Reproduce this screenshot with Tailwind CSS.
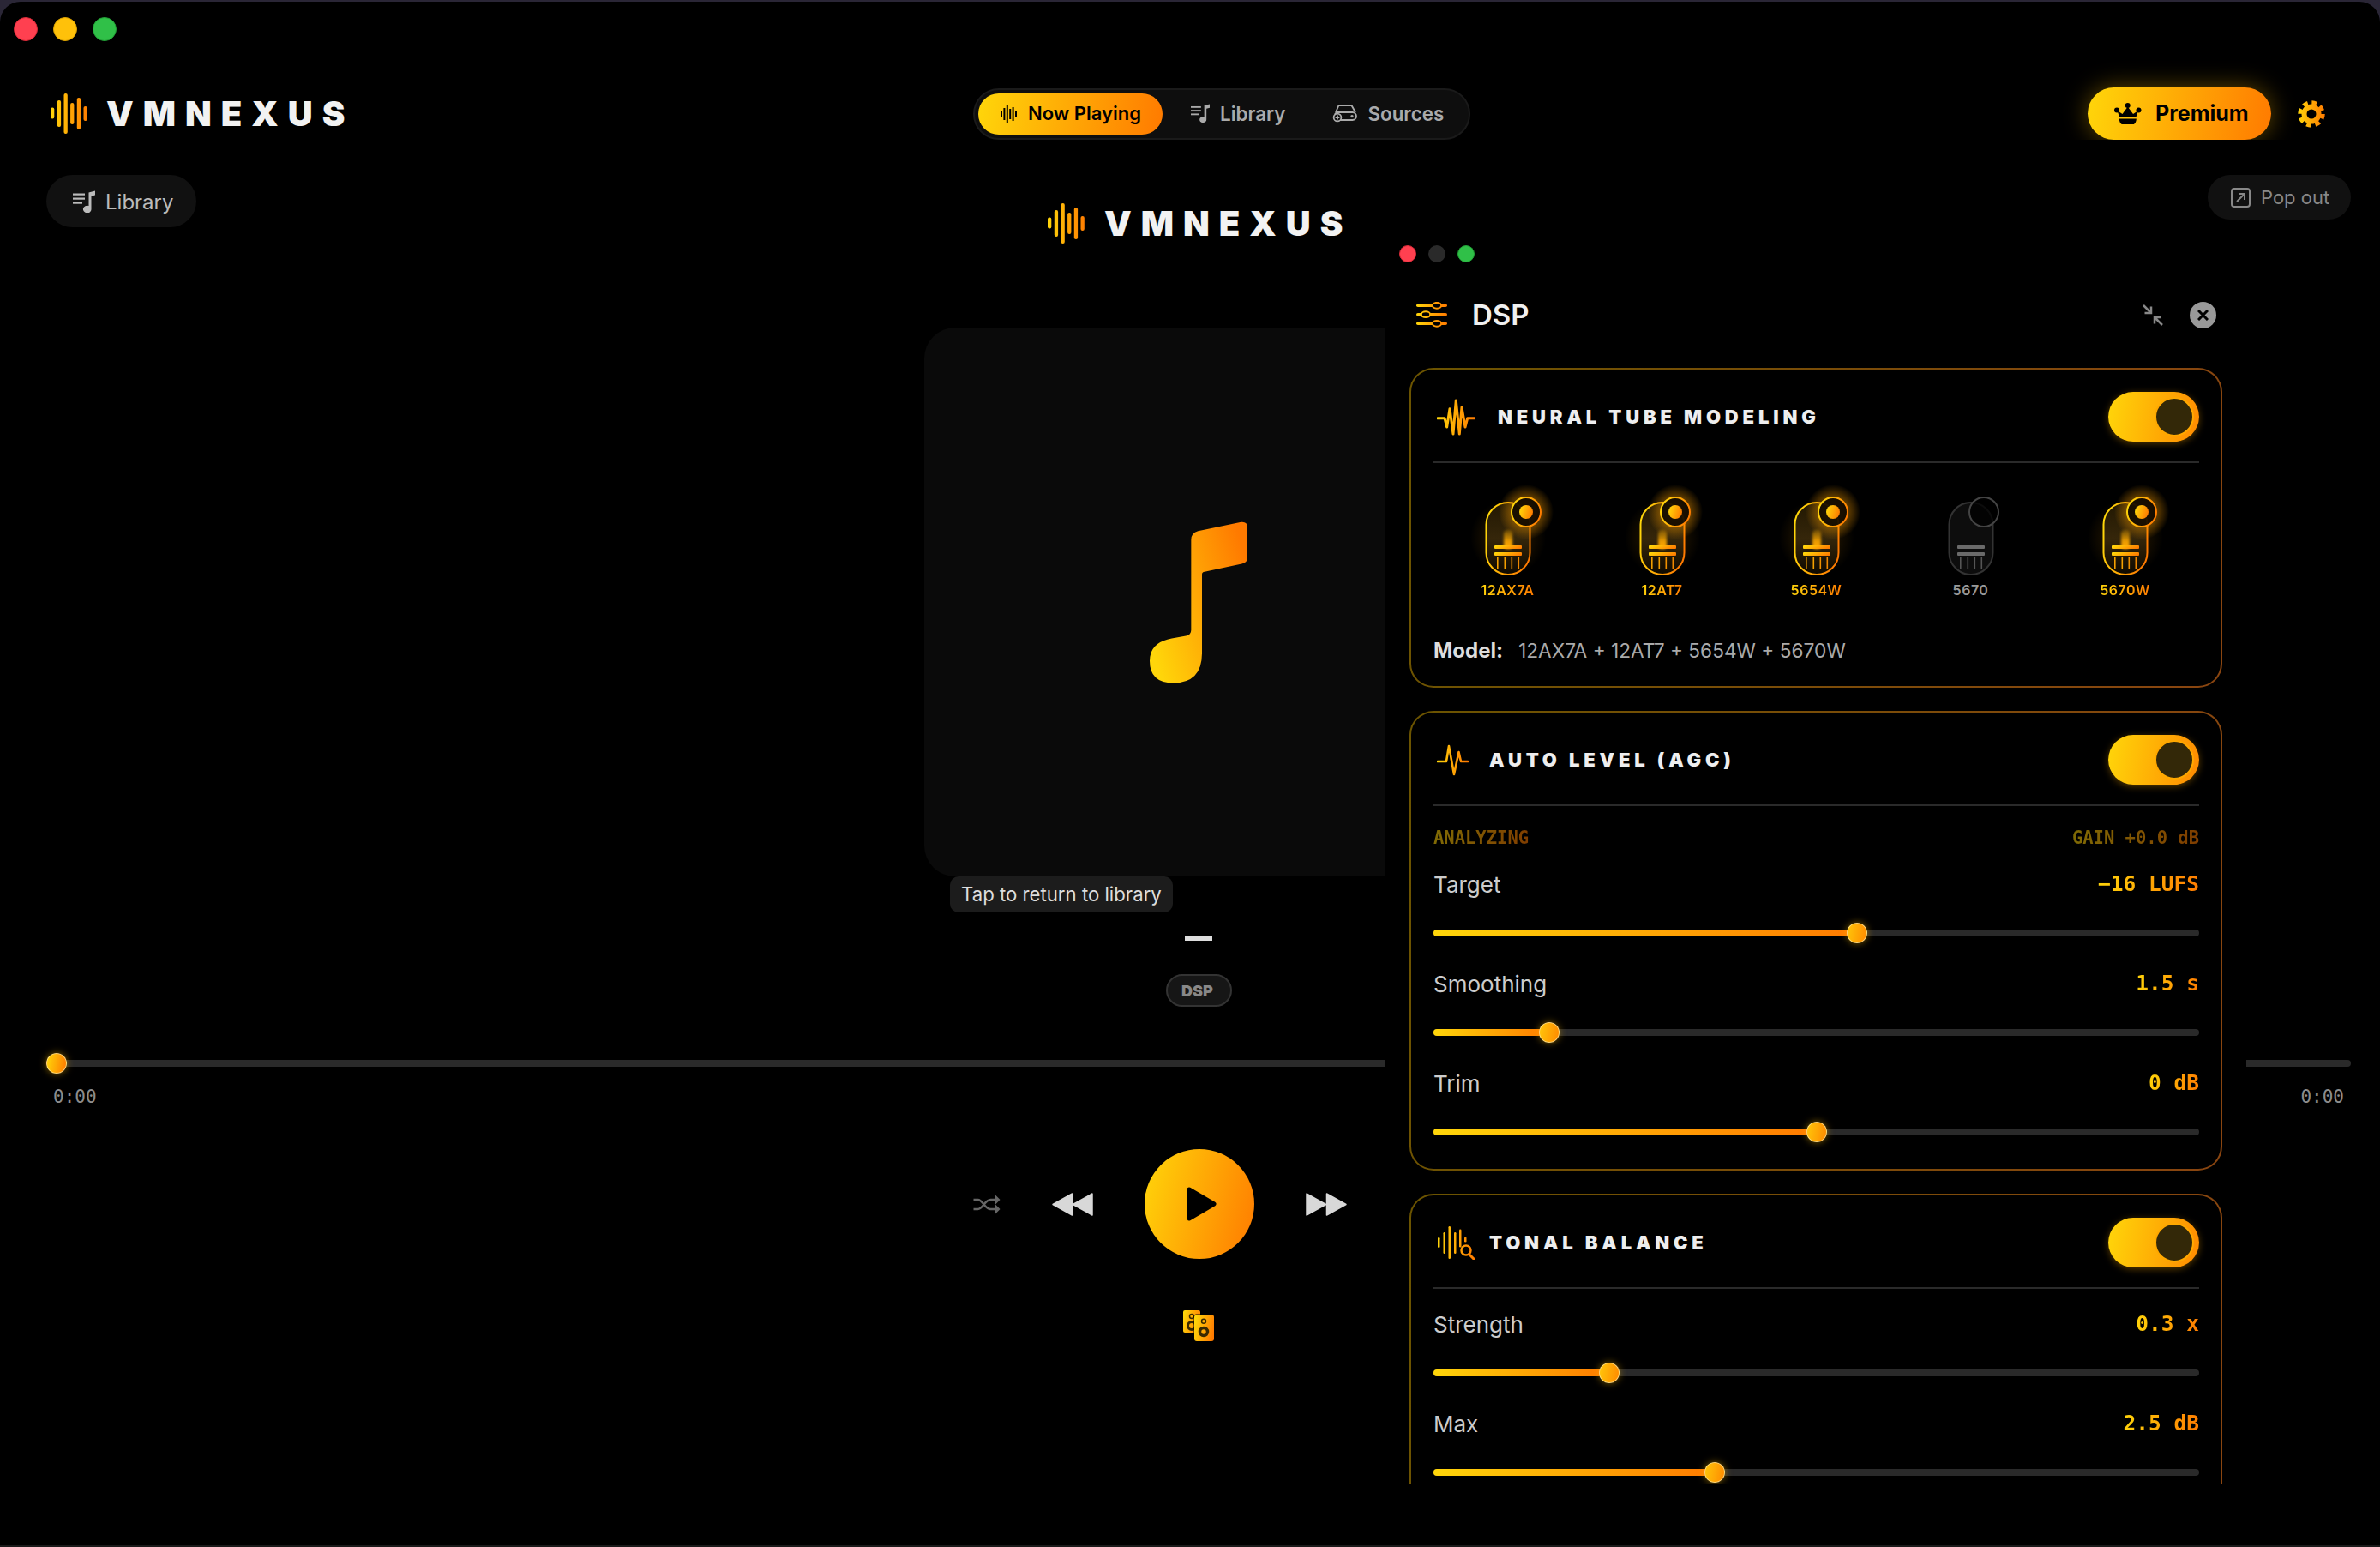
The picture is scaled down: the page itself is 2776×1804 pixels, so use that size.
<!DOCTYPE html>
<html lang="en">
<head>
    <meta charset="UTF-8">
    <title>VMNEXUS</title>
    <script src="https://cdn.jsdelivr.net/npm/@tailwindcss/browser@4"></script>
</head>
<body class="bg-[#2a2636] w-[2776px] h-[1804px] overflow-hidden [font-family:Inter,sans-serif] text-[#ddd]">
    <!-- shared gradients and repeated shapes -->
    <svg class="absolute w-0 h-0" aria-hidden="true">
        <defs>
            <linearGradient id="bb" x1="0" y1="0.35" x2="1" y2="0.65"><stop offset="0" stop-color="#ffd60a"/><stop offset="1" stop-color="#ff7a00"/></linearGradient>
            <linearGradient id="note" x1="0" y1="0.75" x2="1" y2="0.25"><stop offset="0" stop-color="#ffd60a"/><stop offset="1" stop-color="#ff7a00"/></linearGradient>
            <linearGradient id="u32" gradientUnits="userSpaceOnUse" x1="0" y1="0" x2="32" y2="0"><stop offset="0" stop-color="#ffd60a"/><stop offset="1" stop-color="#ff7a00"/></linearGradient>
            <linearGradient id="u36" gradientUnits="userSpaceOnUse" x1="0" y1="0" x2="36" y2="0"><stop offset="0" stop-color="#ffd60a"/><stop offset="1" stop-color="#ff7a00"/></linearGradient>
            <linearGradient id="u45" gradientUnits="userSpaceOnUse" x1="0" y1="0" x2="45" y2="0"><stop offset="0" stop-color="#ffd60a"/><stop offset="1" stop-color="#ff7a00"/></linearGradient>
            <linearGradient id="tubefill" x1="0" y1="0" x2="0" y2="1"><stop offset="0" stop-color="#221802"/><stop offset="0.5" stop-color="#35260a"/><stop offset="1" stop-color="#0e0900"/></linearGradient>
            <linearGradient id="filament" x1="0" y1="0" x2="0" y2="1"><stop offset="0" stop-color="#ffb000" stop-opacity="0.25"/><stop offset="0.6" stop-color="#ffa800" stop-opacity="0.9"/><stop offset="1" stop-color="#ffa800"/></linearGradient>
            <radialGradient id="lampglow"><stop offset="0.35" stop-color="#ffa000" stop-opacity="0.55"/><stop offset="1" stop-color="#ffa000" stop-opacity="0"/></radialGradient>
            <filter id="soft" x="-100%" y="-30%" width="300%" height="160%"><feGaussianBlur stdDeviation="1.6"/></filter>
            <g id="wave-logo">
                <rect x="0" y="16.5" width="4.3" height="13" rx="2"/><rect x="7.8" y="8" width="4.3" height="31" rx="2"/><rect x="15.5" y="0" width="4.3" height="47" rx="2"/><rect x="23.1" y="11" width="4.3" height="25" rx="2"/><rect x="30.8" y="5" width="4.3" height="37" rx="2"/><rect x="38.5" y="15" width="4.3" height="17" rx="2"/>
            </g>
            <g id="tube-on">
                <circle cx="50" cy="50" r="44" fill="url(#lampglow)" opacity="0.25"/>
                <rect x="24.5" y="9" width="51" height="84" rx="25.5" fill="url(#tubefill)" stroke="url(#bb)" stroke-width="2"/>
                <rect x="45" y="41" width="10" height="22" rx="4" fill="url(#filament)" filter="url(#soft)"/>
                <rect x="34" y="59" width="32" height="4" rx="1" fill="url(#bb)"/>
                <rect x="34" y="67" width="32" height="4" rx="1" fill="url(#bb)"/>
                <rect x="37" y="73" width="1.6" height="14" fill="#f5a000"/><rect x="45.5" y="73" width="1.6" height="14" fill="#f5a000"/><rect x="53.5" y="73" width="1.6" height="14" fill="#f09000"/><rect x="61.5" y="73" width="1.6" height="14" fill="#f08800"/>
            </g>
            <g id="lamp-on">
                <circle cx="0" cy="0" r="32" fill="url(#lampglow)"/>
                <circle cx="0" cy="0" r="17" fill="#0c0700" fill-opacity="0.9" stroke="url(#bb)" stroke-width="2"/>
                <circle cx="0" cy="0" r="8" fill="url(#bb)"/>
            </g>
        </defs>
    </svg>

    <div class="relative mt-[2px] w-[2776px] h-[1800px] rounded-t-[24px] bg-black overflow-hidden">
        <!-- title bar -->
        <div class="flex gap-[18px] h-[64px] pt-[18px] pl-[16px]">
            <span class="size-[28px] rounded-full bg-[#ff4050] border border-[#d92a38]"></span>
            <span class="size-[28px] rounded-full bg-[#ffc10a] border border-[#dca300]"></span>
            <span class="size-[28px] rounded-full bg-[#30c048] border border-[#22a036]"></span>
        </div>

        <!-- top bar -->
        <header class="flex items-center pl-[59px] pt-[36px] overflow-hidden">
            <div class="flex items-center w-[1076px]">
                <svg class="w-[43px] h-[47px]" viewBox="0 0 43 47" fill="url(#u45)"><use href="#wave-logo"/></svg>
                <span class="ml-[22px] text-[40px] leading-none font-black tracking-[11px] text-[#f2f2f2]">VMNEXUS</span>
            </div>
            <nav class="flex items-center w-[580px] h-[60px] rounded-full bg-[#0e0e0e] border-2 border-[#1a1a1a] pl-[4px]">
                <div class="flex items-center h-[48px] w-[215px] pl-[26px] rounded-full bg-[linear-gradient(100deg,#ffd60a,#ff7a00)] text-black text-[22px] font-semibold">
                    <svg class="w-[19px] h-[20px]" viewBox="0 0 19 20" fill="#000"><rect x="0" y="7" width="2" height="6"/><rect x="3.4" y="3" width="2" height="14"/><rect x="6.8" y="0" width="2" height="20"/><rect x="10.2" y="4" width="2" height="12"/><rect x="13.6" y="2" width="2" height="16"/><rect x="17" y="7" width="2" height="6"/></svg>
                    <span class="ml-[13px]">Now Playing</span>
                </div>
                <div class="flex items-center pl-[33px] text-[#aaa] text-[22.4px] font-semibold">
                    <svg class="w-[22px] h-[24px]" viewBox="0 0 26 26" fill="#aaa"><rect x="0" y="3.5" width="14" height="2.2"/><rect x="0" y="8.5" width="14" height="2.2"/><rect x="0" y="13.5" width="11" height="2.2"/><path d="M18.5 2.5 L26 0.5 V5.5 L21.5 6.7 V21.5 A4.8 4.3 0 1 1 18.5 18 Z"/></svg>
                    <span class="ml-[12px]">Library</span>
                </div>
                <div class="flex items-center pl-[56px] text-[#aaa] text-[22.4px] font-semibold">
                    <svg class="w-[28px] h-[20px] overflow-visible" viewBox="0 0 28 20" fill="none" stroke="#aaa" stroke-width="1.8"><path d="M3 9 L6.5 1 H21.5 L26 9"/><path d="M8 18 H22.5 A4 4 0 0 0 22.5 9 H5.5 A4.5 4.5 0 0 0 2 11"/><circle cx="5" cy="15" r="4.4"/><path d="M5 12.6 V17.4 M2.6 15 H7.4"/><circle cx="22" cy="13.6" r="0.8" fill="#aaa"/></svg>
                    <span class="ml-[12px]">Sources</span>
                </div>
            </nav>
            <div class="ml-[720px] flex items-center w-[214px] h-[61px] pl-[31px] rounded-full bg-[linear-gradient(100deg,#ffd60a,#ff7a00)] shadow-[0_0_28px_rgba(255,190,0,0.38)] text-black text-[25px] font-bold">
                <svg class="w-[32px] h-[25px]" viewBox="0 0 32 25" fill="#000"><circle cx="3" cy="8.5" r="3"/><circle cx="15.7" cy="3" r="3"/><circle cx="28.5" cy="8.5" r="3"/><path d="M3.5 9 L9.5 13 L15.7 4.5 L22 13 L28 9 L25.5 16.5 H6 Z"/><path d="M5.8 18.5 H25.8 C25.6 22.5 24 25 22 25 H9.5 C7.5 25 6 22.5 5.8 18.5 Z"/></svg>
                <span class="ml-[16px]">Premium</span>
            </div>
            <svg class="ml-[31px] size-[32px]" viewBox="0 0 32 32" fill="none"><circle cx="16" cy="16" r="8.5" stroke="url(#u32)" stroke-width="6"/><circle cx="16" cy="16" r="13" stroke="url(#u32)" stroke-width="5.5" stroke-dasharray="5.6 4.61"/></svg>
        </header>

        <!-- player column -->
        <main>
            <div class="grid grid-cols-[1168px_auto_1fr] items-start h-[219px] pt-[41px] pl-[54px] pr-[34px]">
                <div class="flex items-center w-[175px] h-[61px] pl-[31px] rounded-full bg-[#111] text-[#bbb] text-[24px]">
                    <svg class="size-[26px]" viewBox="0 0 26 26" fill="#bbb"><rect x="0" y="3.5" width="14" height="2.2"/><rect x="0" y="8.5" width="14" height="2.2"/><rect x="0" y="13.5" width="11" height="2.2"/><path d="M18.5 2.5 L26 0.5 V5.5 L21.5 6.7 V21.5 A4.8 4.3 0 1 1 18.5 18 Z"/></svg>
                    <span class="ml-[12px] mt-[2px]">Library</span>
                </div>
                <div class="flex items-center mt-[33px]">
                    <svg class="w-[43px] h-[47px]" viewBox="0 0 43 47" fill="url(#u45)"><use href="#wave-logo"/></svg>
                    <span class="ml-[23px] text-[40px] leading-none font-black tracking-[11px] text-[#f2f2f2]">VMNEXUS</span>
                </div>
                <div class="flex justify-end">
                    <div class="flex items-center w-[167px] h-[52px] pl-[27px] rounded-full bg-[#111] text-[#888] text-[22px]">
                        <svg class="size-[23px]" viewBox="0 0 23 23" fill="none" stroke="#888" stroke-width="2"><rect x="1" y="1" width="21" height="21" rx="3"/><path d="M7 16 L16 7 M9 7 H16 V14"/></svg>
                        <span class="ml-[12px]">Pop out</span>
                    </div>
                </div>
            </div>

            <div class="relative ml-[1078px] flex items-center justify-center w-[640px] h-[640px] rounded-[36px] bg-[#0a0a0a]">
                <svg class="w-[114px] h-[189px]" viewBox="183 85 342 566" fill="url(#note)"><path d="M366 270 Q366 262 375 261 L505 233 Q525 228 525 212 L525 105 Q525 85 503 87 L352 118 Q328 125 328 148 L328 465 Q328 482 310 485 L260 494 Q183 508 183 573 Q183 650 265 650 Q366 650 366 545 Z"/></svg>
                <div class="absolute left-[30px] top-[640px] flex items-center h-[42px] px-[13px] rounded-[10px] bg-[#1c1c1c] text-[#ddd] text-[22.2px] whitespace-nowrap">Tap to return to library</div>
            </div>

            <div class="ml-[1078px] w-[640px] flex flex-col items-center">
                <div class="mt-[70px] w-[32px] h-[5px] bg-[#ddd]"></div>
                <div class="mt-[39px] flex items-center justify-center w-[77px] h-[38px] rounded-full bg-[#161616] border-2 border-[#333] text-[#888] text-[18px] font-black pr-[3px]">DSP</div>
            </div>

            <div class="relative mt-[62px] ml-[54px] w-[2688px] h-[8px] bg-[#2a2a2a] rounded-full">
                <div class="absolute left-0 top-[-8px] size-[24px] rounded-full bg-[linear-gradient(100deg,#ffd60a,#ff7a00)] border border-[#ffe9a8]/70 shadow-[0_0_8px_rgba(255,190,0,0.5)]"></div>
            </div>
            <div class="ml-[54px] w-[2688px] mt-[23px] flex justify-between px-[8px] text-[21px] leading-[24px] text-[#8c8c8c] [font-family:'DejaVu_Sans_Mono',monospace]">
                <span>0:00</span><span>0:00</span>
            </div>

            <div class="mt-[49px] ml-[1135px] flex items-center gap-[60px]">
                <svg class="w-[32px] h-[25px]" viewBox="0 0 31 25" fill="none" stroke="#666" stroke-width="2.4"><path d="M0 18 H5 C11 18 13 7 20 7 H26 M0 7 H5 C11 7 13 18 20 18 H26"/><path d="M25 1 L31 7 L25 13 Z M25 12 L31 18 L25 24 Z" fill="#666" stroke="none"/></svg>
                <svg class="w-[48px] h-[27px]" viewBox="0 0 48 27" fill="#d8d8d8" stroke="#d8d8d8" stroke-width="1.5" stroke-linejoin="round"><path d="M1 13.5 L23.5 1 V26 Z M24.5 13.5 L47 1 V26 Z"/></svg>
                <div class="flex items-center justify-center size-[128px] rounded-full bg-[linear-gradient(105deg,#ffd60a,#ff7a00)]">
                    <svg class="w-[35px] h-[40px] ml-[4px]" viewBox="0 0 35 40" fill="#000" stroke="#000" stroke-width="5" stroke-linejoin="round"><path d="M3 3 L32 20 L3 37 Z"/></svg>
                </div>
                <svg class="w-[48px] h-[27px]" viewBox="0 0 48 27" fill="#d8d8d8" stroke="#d8d8d8" stroke-width="1.5" stroke-linejoin="round"><path d="M1 1 V26 L23.5 13.5 Z M24.5 1 V26 L47 13.5 Z"/></svg>
            </div>

            <svg class="mt-[60px] ml-[1380px] size-[36px]" viewBox="0 0 36 36" fill="none">
                <rect x="0" y="0" width="20" height="26" rx="2" fill="url(#bb)"/>
                <circle cx="10" cy="7" r="2.5" stroke="#3a2a00" stroke-width="1.5"/>
                <circle cx="10" cy="18" r="4.5" stroke="#3a2a00" stroke-width="3"/>
                <rect x="12.5" y="4.5" width="24" height="32" rx="3" fill="#000"/>
                <rect x="13" y="5" width="23" height="31" rx="3" fill="url(#bb)"/>
                <circle cx="24" cy="12.7" r="2.5" stroke="#3a2a00" stroke-width="1.5"/>
                <circle cx="24" cy="25" r="4.5" stroke="#3a2a00" stroke-width="3.5"/>
            </svg>
        </main>

        <!-- DSP window, floating over the player -->
        <aside class="absolute left-[1616px] top-[268px] w-[1004px] h-[1461px] bg-black overflow-hidden px-[28px]">
            <div class="flex gap-[14px] pt-[16px] -ml-[12px]">
                <span class="size-[20px] rounded-full bg-[#ff4050] border border-[#d92a38]"></span>
                <span class="size-[20px] rounded-full bg-[#2a2a2a]"></span>
                <span class="size-[20px] rounded-full bg-[#30c048] border border-[#22a036]"></span>
            </div>

            <div class="flex items-center h-[30px] mt-[46px] ml-[8px] mr-[7px]">
                <svg class="w-[36px] h-[30px]" viewBox="0 0 36 30">
                    <g fill="url(#u36)"><rect x="0" y="2.5" width="36" height="3.6" rx="1.8"/><rect x="0" y="12.9" width="36" height="3.6" rx="1.8"/><rect x="0" y="23.5" width="36" height="3.6" rx="1.8"/></g>
                    <g fill="#000" stroke="url(#u36)" stroke-width="2"><ellipse cx="24" cy="4.3" rx="5.2" ry="3.4"/><ellipse cx="11" cy="14.7" rx="5.2" ry="3.4"/><ellipse cx="24" cy="25.3" rx="5.2" ry="3.4"/></g>
                </svg>
                <span class="ml-[29px] text-[33px] leading-none font-semibold text-[#f0f0f0]">DSP</span>
                <svg class="ml-auto w-[24px] h-[25px]" viewBox="0 0 24 25" fill="none" stroke="#888" stroke-width="2.5"><path d="M1 1 L10 10 M10 2.5 V10 H2.5"/><path d="M23 24 L14 15 M14 22.5 V15 H21.5"/></svg>
                <div class="ml-[31px] flex items-center justify-center size-[31px] rounded-full bg-[#999]">
                    <svg class="size-[13px]" viewBox="0 0 13 13" fill="none" stroke="#000" stroke-width="3"><path d="M1 1 L12 12 M12 1 L1 12"/></svg>
                </div>
            </div>

            <!-- Neural tube modeling -->
            <section class="mt-[47px] rounded-[28px] border-2 border-transparent [background:linear-gradient(#000,#000)_padding-box,linear-gradient(100deg,#6b5400,#8a4510)_border-box] pl-[26px] pr-[25px] pt-[26px] pb-[26px]">
                <div class="flex items-center h-[83px] pb-[23px] border-b-2 border-[#2a2a2a]">
                    <svg class="ml-[4px] w-[45px] h-[43px]" viewBox="0 0 45 43" fill="none" stroke="url(#u45)" stroke-width="3" stroke-linejoin="round" stroke-linecap="round"><path d="M1 22.7 H9 L11.7 33 L15 11.7 L19 41 L22.3 2 L26.3 41 L29 10 L33 33 L35.7 22.7 H44"/></svg>
                    <span class="ml-[26px] text-[22px] font-black tracking-[4.85px] text-[#eee]">NEURAL TUBE MODELING</span>
                    <div class="ml-auto flex justify-end items-start w-[106px] h-[58px] p-[6px] rounded-full bg-[linear-gradient(100deg,#ffd60a,#ff8a00)] shadow-[0_2px_8px_rgba(255,170,0,0.35)]">
                        <div class="size-[46px] rounded-full bg-[#332808] border-2 border-[#ffa800]"></div>
                    </div>
                </div>
                <div class="mt-[37px] -mx-[4px] flex justify-center">
                    <div class="w-[180px] shrink-0 flex flex-col items-center">
                        <svg class="size-[100px] overflow-visible" viewBox="0 0 100 100"><use href="#tube-on"/><use href="#lamp-on" x="71" y="20"/></svg>
                        <span class="mt-px text-[16px] leading-[20px] font-semibold tracking-[0.5px] bg-[linear-gradient(100deg,#ffd60a,#ff7a00)] bg-clip-text text-transparent">12AX7A</span>
                    </div>
                    <div class="w-[180px] shrink-0 flex flex-col items-center">
                        <svg class="size-[100px] overflow-visible" viewBox="0 0 100 100"><use href="#tube-on"/><use href="#lamp-on" x="65" y="20"/></svg>
                        <span class="mt-px text-[16px] leading-[20px] font-semibold tracking-[0.5px] bg-[linear-gradient(100deg,#ffd60a,#ff7a00)] bg-clip-text text-transparent">12AT7</span>
                    </div>
                    <div class="w-[180px] shrink-0 flex flex-col items-center">
                        <svg class="size-[100px] overflow-visible" viewBox="0 0 100 100"><use href="#tube-on"/><use href="#lamp-on" x="69" y="20"/></svg>
                        <span class="mt-px text-[16px] leading-[20px] font-semibold tracking-[0.5px] bg-[linear-gradient(100deg,#ffd60a,#ff7a00)] bg-clip-text text-transparent">5654W</span>
                    </div>
                    <div class="w-[180px] shrink-0 flex flex-col items-center">
                        <svg class="size-[100px] overflow-visible" viewBox="0 0 100 100">
                            <rect x="24.5" y="9" width="51" height="84" rx="25.5" fill="#0d0d0d" stroke="#333" stroke-width="2"/>
                            <rect x="34" y="59" width="32" height="4" rx="1" fill="#6a6a6a"/><rect x="34" y="67" width="32" height="4" rx="1" fill="#6a6a6a"/>
                            <rect x="37" y="73" width="1.6" height="14" fill="#555"/><rect x="45.5" y="73" width="1.6" height="14" fill="#555"/><rect x="53.5" y="73" width="1.6" height="14" fill="#555"/><rect x="61.5" y="73" width="1.6" height="14" fill="#555"/>
                            <circle cx="65" cy="20" r="17" fill="#000" fill-opacity="0.75" stroke="#444" stroke-width="2"/>
                        </svg>
                        <span class="mt-px text-[16px] leading-[20px] font-semibold tracking-[0.5px] text-[#999]">5670</span>
                    </div>
                    <div class="w-[180px] shrink-0 flex flex-col items-center">
                        <svg class="size-[100px] overflow-visible" viewBox="0 0 100 100"><use href="#tube-on"/><use href="#lamp-on" x="69" y="20"/></svg>
                        <span class="mt-px text-[16px] leading-[20px] font-semibold tracking-[0.5px] bg-[linear-gradient(100deg,#ffd60a,#ff7a00)] bg-clip-text text-transparent">5670W</span>
                    </div>
                </div>
                <div class="mt-[46px] flex items-center h-[30px]">
                    <span class="text-[24px] font-bold text-[#ddd]">Model:</span>
                    <span class="ml-[18px] text-[22.7px] text-[#aaa]">12AX7A + 12AT7 + 5654W + 5670W</span>
                </div>
            </section>

            <!-- Auto level -->
            <section class="mt-[27px] rounded-[28px] border-2 border-transparent [background:linear-gradient(#000,#000)_padding-box,linear-gradient(100deg,#6b5400,#8a4510)_border-box] pl-[26px] pr-[25px] pt-[26px] pb-[39px]">
                <div class="flex items-center h-[83px] pb-[23px] border-b-2 border-[#2a2a2a]">
                    <svg class="ml-[4px] w-[37px] h-[37px]" viewBox="0 0 37 37" fill="none" stroke="url(#u36)" stroke-width="2.6" stroke-linejoin="round" stroke-linecap="round"><path d="M1 20 H11 L14 2 L20 35 L25.5 9 L28 20 H36"/></svg>
                    <span class="ml-[24px] text-[22px] font-black tracking-[4.85px] text-[#eee]">AUTO LEVEL (AGC)</span>
                    <div class="ml-auto flex justify-end items-start w-[106px] h-[58px] p-[6px] rounded-full bg-[linear-gradient(100deg,#ffd60a,#ff8a00)] shadow-[0_2px_8px_rgba(255,170,0,0.35)]">
                        <div class="size-[46px] rounded-full bg-[#332808] border-2 border-[#ffa800]"></div>
                    </div>
                </div>
                <div class="mt-[25px] flex justify-between h-[24px] text-[20.5px] leading-[24px] font-bold [font-family:'DejaVu_Sans_Mono',monospace] opacity-50">
                    <span class="bg-[linear-gradient(100deg,#ffd60a,#ff7a00)] bg-clip-text text-transparent">ANALYZING</span>
                    <span class="bg-[linear-gradient(100deg,#ffd60a,#ff7a00)] bg-clip-text text-transparent">GAIN +0.0 dB</span>
                </div>
                <div class="mt-[26px] flex justify-between items-center h-[32px]">
                    <span class="text-[26px] text-[#ccc]">Target</span>
                    <span class="text-[24.5px] font-bold [font-family:'DejaVu_Sans_Mono',monospace] bg-[linear-gradient(100deg,#ffd60a,#ff7a00)] bg-clip-text text-transparent">−16 LUFS</span>
                </div>
                <div class="mt-[37px] h-[8px] rounded-full bg-[#2a2a2a]">
                    <div class="relative h-full rounded-full bg-[linear-gradient(90deg,#ffd60a,#ff7a00)]" style="width:55.3%">
                        <div class="absolute right-[-12px] top-[-8px] size-[24px] rounded-full bg-[linear-gradient(100deg,#ffc60a,#ff8a00)] border border-[#ffe9a8]/70 shadow-[0_0_8px_rgba(255,190,0,0.5)]"></div>
                    </div>
                </div>
                <div class="mt-[39px] flex justify-between items-center h-[32px]">
                    <span class="text-[26px] text-[#ccc]">Smoothing</span>
                    <span class="text-[24.5px] font-bold [font-family:'DejaVu_Sans_Mono',monospace] bg-[linear-gradient(100deg,#ffd60a,#ff7a00)] bg-clip-text text-transparent">1.5 s</span>
                </div>
                <div class="mt-[37px] h-[8px] rounded-full bg-[#2a2a2a]">
                    <div class="relative h-full rounded-full bg-[linear-gradient(90deg,#ffd60a,#ff7a00)]" style="width:15.1%">
                        <div class="absolute right-[-12px] top-[-8px] size-[24px] rounded-full bg-[linear-gradient(100deg,#ffc60a,#ff8a00)] border border-[#ffe9a8]/70 shadow-[0_0_8px_rgba(255,190,0,0.5)]"></div>
                    </div>
                </div>
                <div class="mt-[39px] flex justify-between items-center h-[32px]">
                    <span class="text-[26px] text-[#ccc]">Trim</span>
                    <span class="text-[24.5px] font-bold [font-family:'DejaVu_Sans_Mono',monospace] bg-[linear-gradient(100deg,#ffd60a,#ff7a00)] bg-clip-text text-transparent">0 dB</span>
                </div>
                <div class="mt-[37px] h-[8px] rounded-full bg-[#2a2a2a]">
                    <div class="relative h-full rounded-full bg-[linear-gradient(90deg,#ffd60a,#ff7a00)]" style="width:50%">
                        <div class="absolute right-[-12px] top-[-8px] size-[24px] rounded-full bg-[linear-gradient(100deg,#ffc60a,#ff8a00)] border border-[#ffe9a8]/70 shadow-[0_0_8px_rgba(255,190,0,0.5)]"></div>
                    </div>
                </div>
            </section>

            <!-- Tonal balance -->
            <section class="mt-[27px] rounded-[28px] border-2 border-transparent [background:linear-gradient(#000,#000)_padding-box,linear-gradient(100deg,#6b5400,#8a4510)_border-box] pl-[26px] pr-[25px] pt-[26px] pb-[40px]">
                <div class="flex items-center h-[83px] pb-[23px] border-b-2 border-[#2a2a2a]">
                    <svg class="ml-[4px] w-[45px] h-[39px]" viewBox="0 0 45 39">
                        <g fill="url(#u45)"><rect x="1" y="13" width="2.5" height="12" rx="1.2"/><rect x="7.5" y="7" width="2.5" height="25" rx="1.2"/><rect x="13.5" y="0" width="2.5" height="38" rx="1.2"/><rect x="20" y="7" width="2.5" height="25" rx="1.2"/><rect x="26" y="3.5" width="2.5" height="21" rx="1.2"/><rect x="32" y="12.5" width="2.5" height="6" rx="1.2"/></g>
                        <path d="M38 33 L43 38" stroke="url(#u45)" stroke-width="3" stroke-linecap="round" fill="none"/>
                        <circle cx="34" cy="28" r="5.5" fill="#000" stroke="url(#u45)" stroke-width="2.5"/>
                    </svg>
                    <span class="ml-[16px] text-[22px] font-black tracking-[4.85px] text-[#eee]">TONAL BALANCE</span>
                    <div class="ml-auto flex justify-end items-start w-[106px] h-[58px] p-[6px] rounded-full bg-[linear-gradient(100deg,#ffd60a,#ff8a00)] shadow-[0_2px_8px_rgba(255,170,0,0.35)]">
                        <div class="size-[46px] rounded-full bg-[#332808] border-2 border-[#ffa800]"></div>
                    </div>
                </div>
                <div class="mt-[25px] flex justify-between items-center h-[32px]">
                    <span class="text-[26px] text-[#ccc]">Strength</span>
                    <span class="text-[24.5px] font-bold [font-family:'DejaVu_Sans_Mono',monospace] bg-[linear-gradient(100deg,#ffd60a,#ff7a00)] bg-clip-text text-transparent">0.3 x</span>
                </div>
                <div class="mt-[37px] h-[8px] rounded-full bg-[#2a2a2a]">
                    <div class="relative h-full rounded-full bg-[linear-gradient(90deg,#ffd60a,#ff7a00)]" style="width:23%">
                        <div class="absolute right-[-12px] top-[-8px] size-[24px] rounded-full bg-[linear-gradient(100deg,#ffc60a,#ff8a00)] border border-[#ffe9a8]/70 shadow-[0_0_8px_rgba(255,190,0,0.5)]"></div>
                    </div>
                </div>
                <div class="mt-[39px] flex justify-between items-center h-[32px]">
                    <span class="text-[26px] text-[#ccc]">Max</span>
                    <span class="text-[24.5px] font-bold [font-family:'DejaVu_Sans_Mono',monospace] bg-[linear-gradient(100deg,#ffd60a,#ff7a00)] bg-clip-text text-transparent">2.5 dB</span>
                </div>
                <div class="mt-[37px] h-[8px] rounded-full bg-[#2a2a2a]">
                    <div class="relative h-full rounded-full bg-[linear-gradient(90deg,#ffd60a,#ff7a00)]" style="width:36.7%">
                        <div class="absolute right-[-12px] top-[-8px] size-[24px] rounded-full bg-[linear-gradient(100deg,#ffc60a,#ff8a00)] border border-[#ffe9a8]/70 shadow-[0_0_8px_rgba(255,190,0,0.5)]"></div>
                    </div>
                </div>
            </section>
        </aside>
    </div>
    <div class="h-[2px] bg-[#1a1a1a]"></div>
</body>
</html>
